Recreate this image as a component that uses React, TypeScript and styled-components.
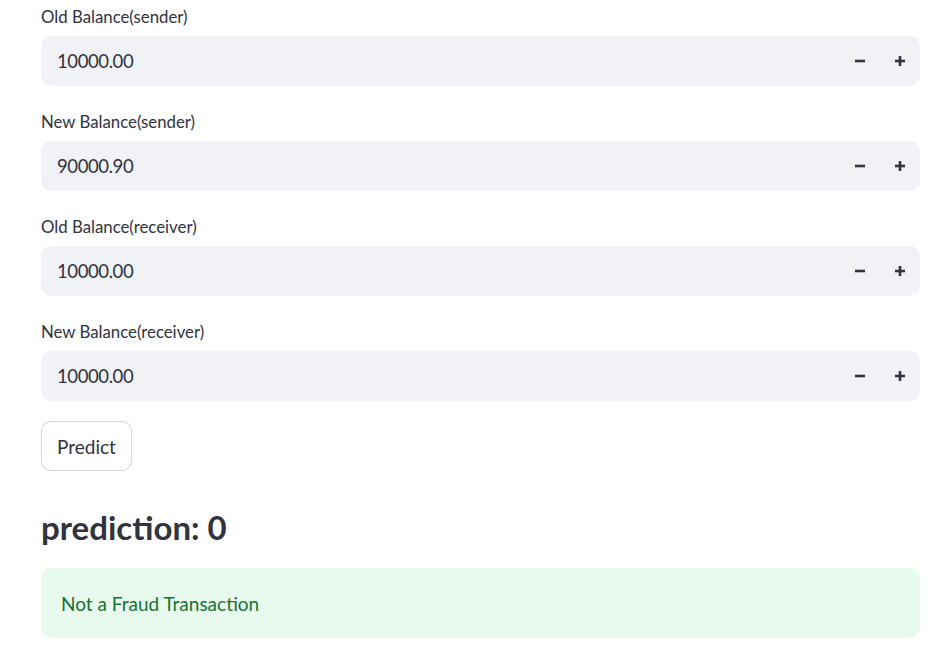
import React from "react";
import styled, { createGlobalStyle } from "styled-components";

const Global = createGlobalStyle`
  html, body { margin: 0; padding: 0; background: #ffffff; }
  body { font-family: Lato, "Liberation Sans", sans-serif; color: rgb(49, 51, 63); }
`;

const Page = styled.div`
  width: 879px;
  padding: 6px 0 0 41px;
  display: flex;
  flex-direction: column;
`;

const Field = styled.div`
  display: flex;
  flex-direction: column;
  margin-bottom: 25px;
`;

const Label = styled.label`
  font-size: 16.8px;
  line-height: 21px;
  height: 21px;
  margin-bottom: 9px;
  color: rgb(49, 51, 63);
`;

const InputBox = styled.div`
  height: 50px;
  background: rgb(240, 242, 246);
  border-radius: 10px;
  display: flex;
  align-items: center;
`;

const Value = styled.div`
  flex: 1;
  padding-left: 16px;
  font-size: 18.5px;
  letter-spacing: -0.4px;
  color: rgb(49, 51, 63);
`;

const StepButton = styled.button`
  width: 40px;
  height: 50px;
  border: none;
  background: transparent;
  padding: 0;
  display: flex;
  align-items: center;
  justify-content: center;
  color: rgb(49, 51, 63);
  cursor: pointer;
`;

const PredictButton = styled.button`
  align-self: flex-start;
  margin-top: -5px;
  height: 50px;
  padding: 0 15px;
  border: 1px solid rgba(49, 51, 63, 0.2);
  border-radius: 10px;
  background: #ffffff;
  font-family: inherit;
  font-size: 19px;
  color: rgb(49, 51, 63);
`;

const Heading = styled.h3`
  margin: 34px 0 0 0;
  font-size: 33px;
  line-height: 44px;
  font-weight: 700;
  color: rgb(49, 51, 63);
`;

const Alert = styled.div`
  margin-top: 19px;
  height: 70px;
  border-radius: 10px;
  background: rgb(232, 249, 238);
  color: rgb(23, 114, 51);
  font-size: 19px;
  display: flex;
  align-items: center;
  padding-left: 20px;
`;

const Minus = () => (
  <svg width="12" height="12" viewBox="0 0 12 12">
    <rect x="1" y="4.7" width="10" height="2.6" fill="currentColor" />
  </svg>
);

const Plus = () => (
  <svg width="12" height="12" viewBox="0 0 12 12">
    <rect x="1" y="4.7" width="10" height="2.6" fill="currentColor" />
    <rect x="4.7" y="1" width="2.6" height="10" fill="currentColor" />
  </svg>
);

const fields = [
  { label: "Old Balance(sender)", value: "10000.00" },
  { label: "New Balance(sender)", value: "90000.90" },
  { label: "Old Balance(receiver)", value: "10000.00" },
  { label: "New Balance(receiver)", value: "10000.00" },
];

export default function App() {
  return (
    <>
      <Global />
      <Page>
        {fields.map((f) => (
          <Field key={f.label}>
            <Label>{f.label}</Label>
            <InputBox>
              <Value>{f.value}</Value>
              <StepButton aria-label="decrement"><Minus /></StepButton>
              <StepButton aria-label="increment"><Plus /></StepButton>
            </InputBox>
          </Field>
        ))}
        <PredictButton>Predict</PredictButton>
        <Heading>prediction: 0</Heading>
        <Alert>Not a Fraud Transaction</Alert>
      </Page>
    </>
  );
}
